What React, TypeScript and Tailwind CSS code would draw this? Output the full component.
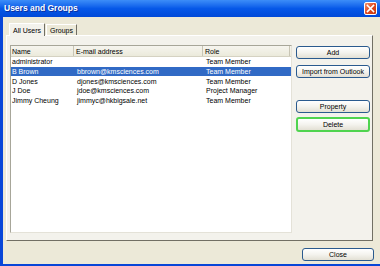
import React from "react";

const rows = [
  { name: "administrator", email: "", role: "Team Member", sel: false },
  { name: "B Brown", email: "bbrown@kmsciences.com", role: "Team Member", sel: true },
  { name: "D Jones", email: "djones@kmsciences.com", role: "Team Member", sel: false },
  { name: "J Doe", email: "jdoe@kmsciences.com", role: "Project Manager", sel: false },
  { name: "Jimmy Cheung", email: "jimmyc@hkbigsale.net", role: "Team Member", sel: false },
];

function XpButton({ label, green = false, className = "" }: { label: string; green?: boolean; className?: string }) {
  return (
    <div
      className={
        "flex items-center justify-center rounded-[3px] bg-gradient-to-b from-white via-[#F4F3EE] to-[#E3E0D5] text-[7px] leading-none text-black " +
        (green ? "border-2 border-[#4FD44F] " : "border border-[#2A5A8E] ") +
        className
      }
    >
      {label}
    </div>
  );
}

export default function App() {
  return (
    <div
      className="w-[380px] h-[266px] bg-[#ECE9D8] flex flex-col overflow-hidden"
      style={{ fontFamily: '"Liberation Sans", Arial, sans-serif' }}
    >
      {/* Title bar */}
      <div className="h-[17px] flex items-center justify-between pl-[4px] pr-[3px] bg-gradient-to-b from-[#3C8DF8] via-[#0658E8] to-[#0049D8]">
        <span className="text-white font-bold text-[8.5px] leading-none" style={{ textShadow: "1px 1px 0 #0B2F9E" }}>
          Users and Groups
        </span>
        <div className="w-[13px] h-[13px] rounded-[2px] border border-white bg-gradient-to-br from-[#F0906A] via-[#E2491F] to-[#C2350F] flex items-center justify-center">
          <svg width="9" height="9" viewBox="0 0 9 9">
            <path d="M1.5 1.5 L7.5 7.5 M7.5 1.5 L1.5 7.5" stroke="white" strokeWidth="1.6" strokeLinecap="square" />
          </svg>
        </div>
      </div>

      {/* Body */}
      <div className="flex-1 flex flex-col border-l-[3px] border-b-[2px] border-[#0846D8]">
        {/* Tabs */}
        <div className="flex items-end pt-[5px] pl-[6px] h-[18px]">
          <div className="h-[13px] px-[3px] flex items-center text-[7px] leading-none bg-[#F3F2EC] border-l border-t border-white border-r border-r-[#716F64] rounded-tr-[1px] relative z-10 -mb-[1px]">
            All Users
          </div>
          <div className="h-[11px] px-[3px] flex items-center text-[7px] leading-none bg-[#ECE9D8] border-l border-t border-white border-r border-r-[#716F64] ml-[1px]">
            Groups
          </div>
        </div>

        {/* Panel */}
        <div className="ml-[3px] w-[367px] h-[206px] bg-[#F3F2EC] border border-white border-r-[#716F64] border-b-[#716F64] flex pl-[3px] pt-[9px]">
          {/* List */}
          <div className="w-[282px] h-[188px] bg-white border border-[#A7A699] border-r-[#E4E2D8] border-b-[#E4E2D8] flex flex-col">
            <div className="h-[11px] flex bg-gradient-to-b from-[#F6F5EF] to-[#EBEADB] border-b border-[#D5D2C2] text-[7px] leading-none text-black">
              <div className="w-[63px] flex items-center pl-[1px] border-r border-[#C8C5B5]">Name</div>
              <div className="w-[129px] flex items-center pl-[2px] border-r border-[#C8C5B5]">E-mail address</div>
              <div className="w-[87px] flex items-center pl-[2px] border-r border-[#C8C5B5]">Role</div>
            </div>
            {rows.map((r) => (
              <div
                key={r.name}
                className={
                  "h-[9.7px] flex text-[7px] leading-none " +
                  (r.sel ? "bg-[#316AC5] text-white" : "text-black")
                }
              >
                <div className="w-[63px] flex items-center pl-[1px] whitespace-nowrap">{r.name}</div>
                <div className="w-[129px] flex items-center pl-[3px] whitespace-nowrap">{r.email}</div>
                <div className="w-[87px] flex items-center pl-[3px] whitespace-nowrap">{r.role}</div>
              </div>
            ))}
          </div>

          {/* Buttons */}
          <div className="ml-[4px] pt-[1px] flex flex-col w-[74px]">
            <XpButton label="Add" className="h-[13px]" />
            <XpButton label="Import from Outlook" className="h-[13px] mt-[6px]" />
            <XpButton label="Property" className="h-[13px] mt-[22px]" />
            <XpButton label="Delete" green className="h-[15px] mt-[4px]" />
          </div>
        </div>

        {/* Footer */}
        <div className="flex justify-end pr-[6px] pt-[7px]">
          <XpButton label="Close" className="w-[72px] h-[13px]" />
        </div>
      </div>
    </div>
  );
}
